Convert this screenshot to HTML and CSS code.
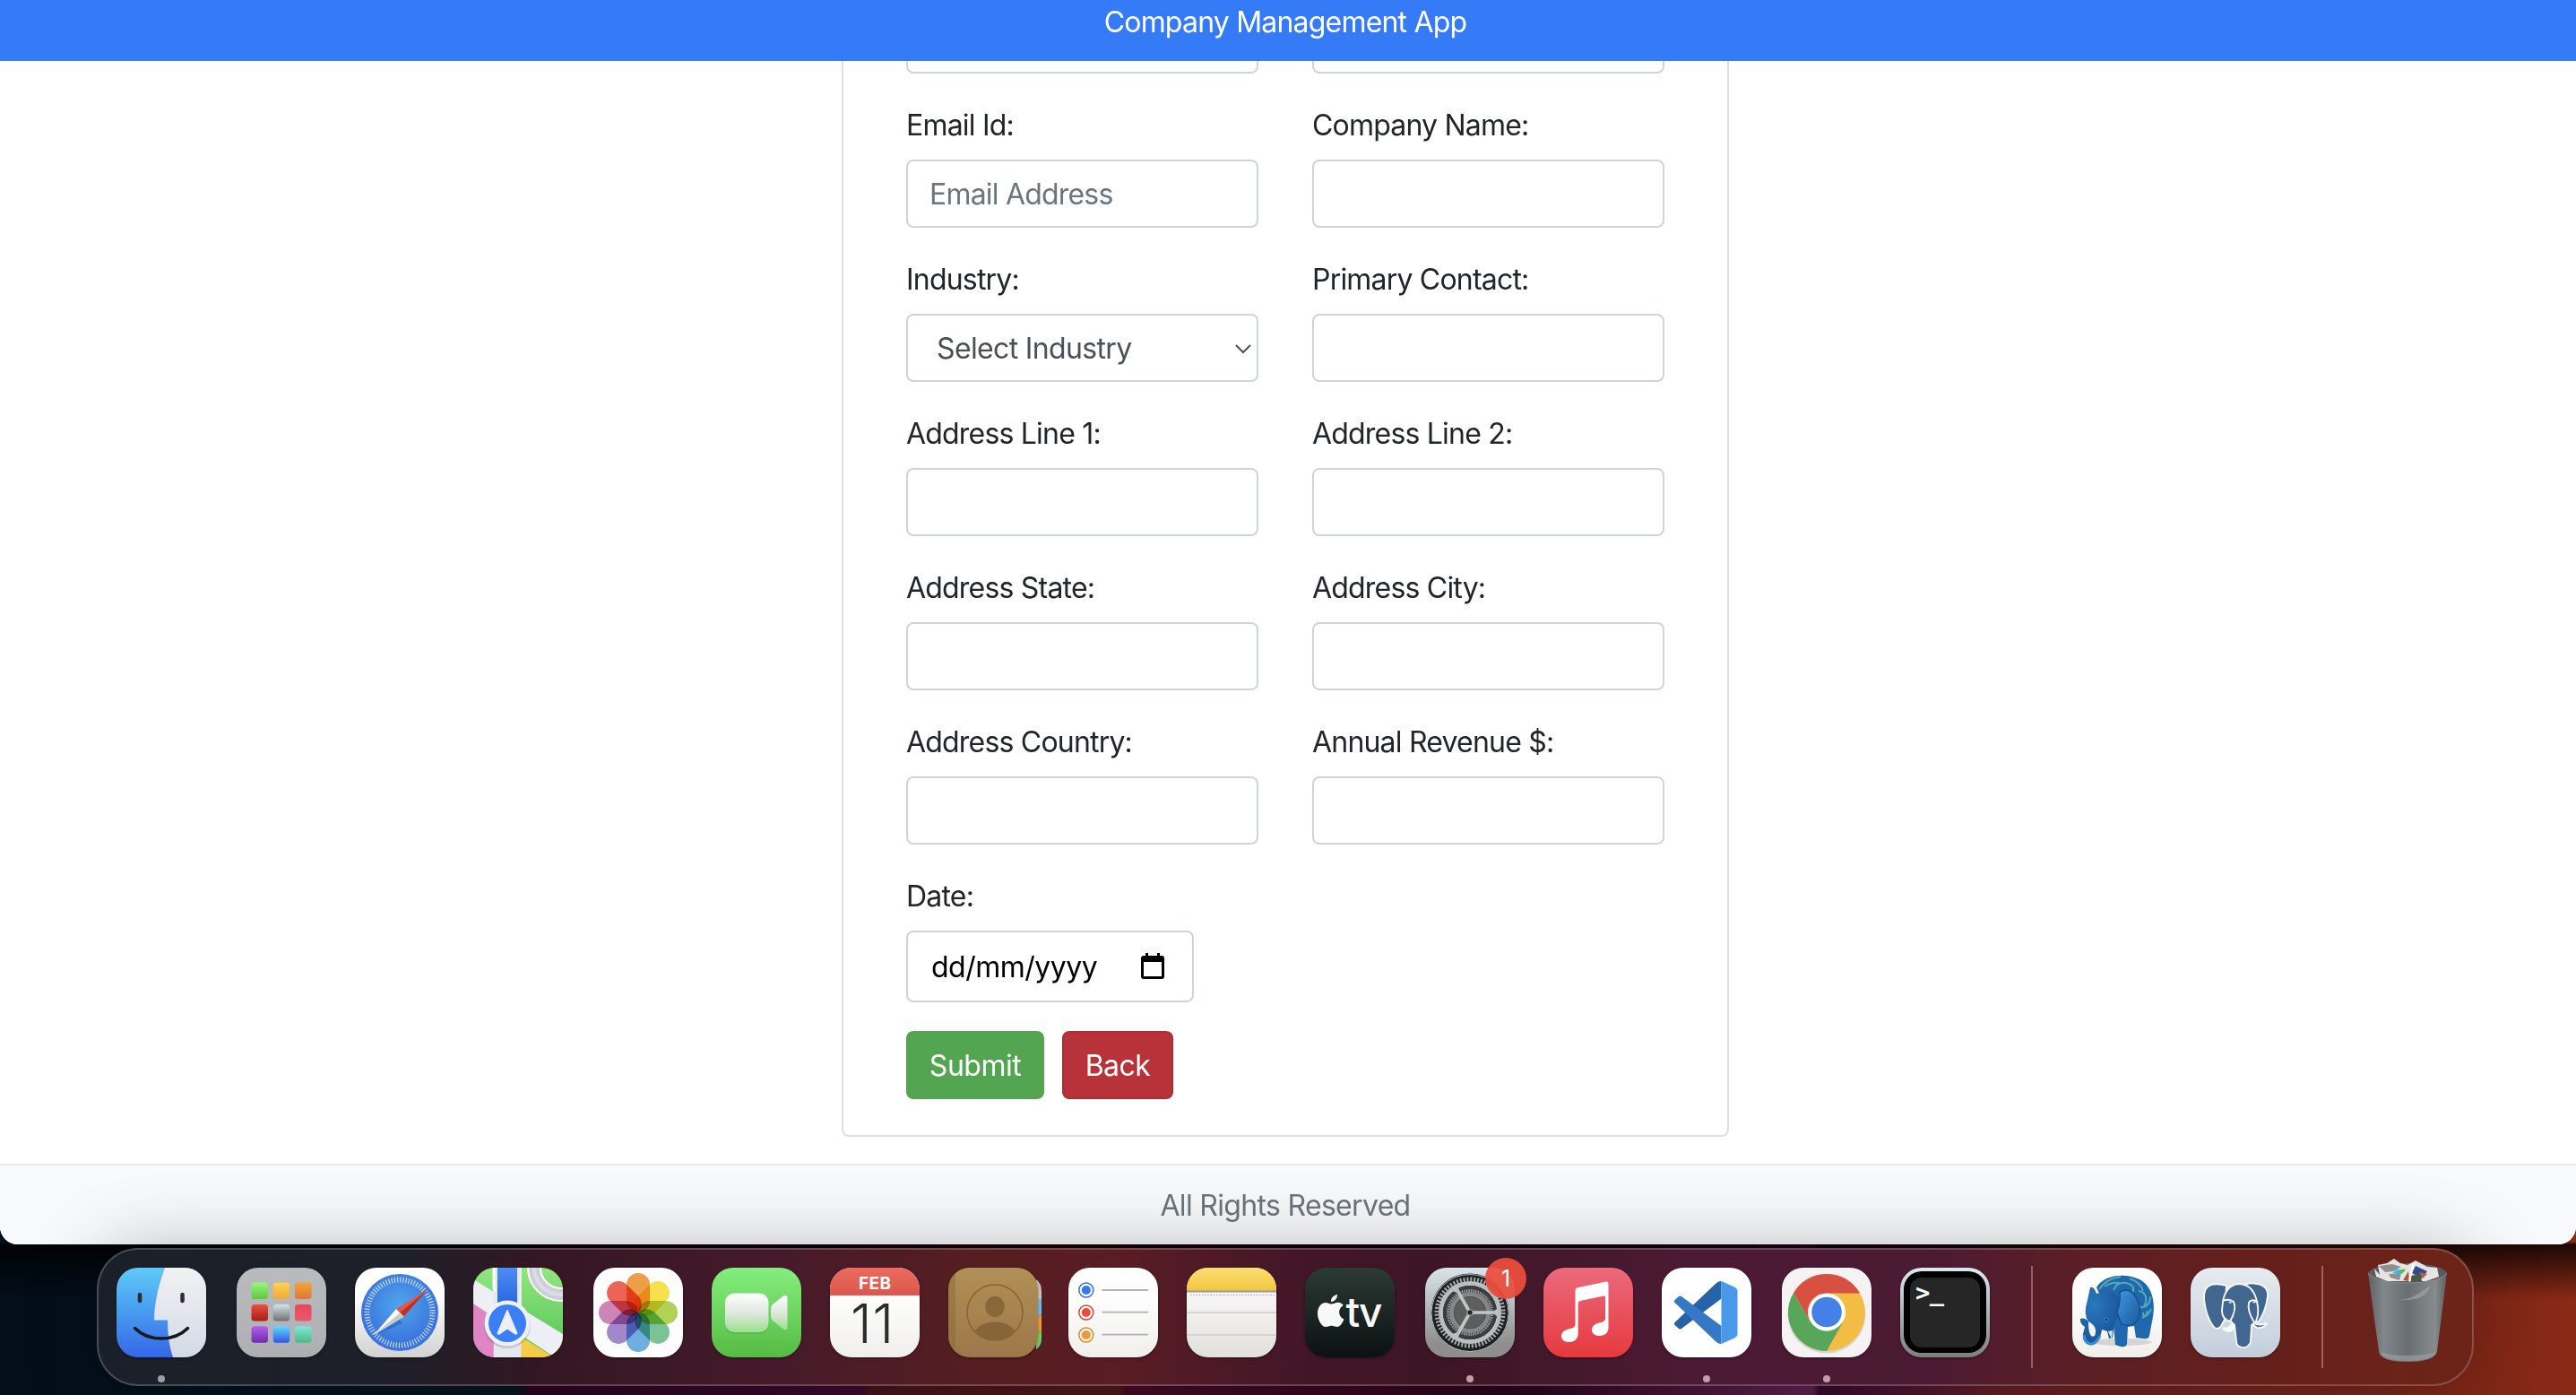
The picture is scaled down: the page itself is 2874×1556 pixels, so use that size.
FILE: index.html
```html
<!DOCTYPE html>
<html lang="en">
<head>
<meta charset="utf-8">
<title>Company Management App</title>
<link rel="stylesheet" href="styles.css">
</head>
<body>
<div class="window">
  <header class="header">Company Management App</header>
  <main class="content">
    <form class="card">
      <div class="grid">
        <div class="field"><input class="control" type="text"></div>
        <div class="field"><input class="control" type="text"></div>
        <div class="field"><label>Email Id:</label><input class="control" type="text" placeholder="Email Address"></div>
        <div class="field"><label>Company Name:</label><input class="control" type="text"></div>
        <div class="field"><label>Industry:</label>
          <div class="control select"><span>Select Industry</span>
            <svg width="20" height="12" viewBox="0 0 20 12"><path d="M2 2l8 8 8-8" fill="none" stroke="#495057" stroke-width="2"/></svg></div></div>
        <div class="field"><label>Primary Contact:</label><input class="control" type="text"></div>
        <div class="field"><label>Address Line 1:</label><input class="control" type="text"></div>
        <div class="field"><label>Address Line 2:</label><input class="control" type="text"></div>
        <div class="field"><label>Address State:</label><input class="control" type="text"></div>
        <div class="field"><label>Address City:</label><input class="control" type="text"></div>
        <div class="field"><label>Address Country:</label><input class="control" type="text"></div>
        <div class="field"><label>Annual Revenue $:</label><input class="control" type="text"></div>
        <div class="field"><label>Date:</label>
          <div class="control date"><span>dd/mm/yyyy</span>
            <svg width="26" height="29" viewBox="0 0 26 29"><path d="M5 0h3v3h10V0h3v3h2q3 0 3 3v20q0 3-3 3H3q-3 0-3-3V6q0-3 3-3h2zM3 10v16h20V10z" fill="#000" fill-rule="evenodd"/></svg></div></div>
      </div>
      <div class="actions">
        <button class="btn submit" type="button">Submit</button>
        <button class="btn back" type="button">Back</button>
      </div>
    </form>
  </main>
  <footer class="footer">All Rights Reserved</footer>
</div>

<svg width="0" height="0" class="defs">
  <defs>
    <linearGradient id="gFinder" x2="0" y2="1"><stop stop-color="#5fc9f8"/><stop offset=".45" stop-color="#4aa0f0"/><stop offset="1" stop-color="#3566e8"/></linearGradient>
    <linearGradient id="gFace" x2="0" y2="1"><stop stop-color="#f1f1f3"/><stop offset="1" stop-color="#d3dae6"/></linearGradient>
    <linearGradient id="gPad" x2="0" y2="1"><stop stop-color="#b9bbbe"/><stop offset="1" stop-color="#adafb2"/></linearGradient>
    <linearGradient id="gWhite" x2="0" y2="1"><stop offset=".3" stop-color="#fff"/><stop offset="1" stop-color="#d2d2d2"/></linearGradient>
    <linearGradient id="gPaper" x2="0" y2="1"><stop offset=".3" stop-color="#fefefe"/><stop offset="1" stop-color="#f0efec"/></linearGradient>
    <linearGradient id="gNote" x2="0" y2="1"><stop offset=".3" stop-color="#f7f6f4"/><stop offset="1" stop-color="#e1e0da"/></linearGradient>
    <radialGradient id="gSafari" cy=".4"><stop stop-color="#50a6ec"/><stop offset="1" stop-color="#3a74de"/></radialGradient>
    <linearGradient id="gGreen" x2="0" y2="1"><stop stop-color="#86ee7e"/><stop offset="1" stop-color="#55bb44"/></linearGradient>
    <linearGradient id="gMap" x2="0" y2="1"><stop stop-color="#92e67f"/><stop offset="1" stop-color="#51c356"/></linearGradient>
    <linearGradient id="gRoad" x2="0" y2="1"><stop stop-color="#4c8df5"/><stop offset="1" stop-color="#1f5fd8"/></linearGradient>
    <linearGradient id="gCam" x2="0" y2="1"><stop stop-color="#fff"/><stop offset=".5" stop-color="#dfe8de"/><stop offset="1" stop-color="#9be08f"/></linearGradient>
    <linearGradient id="gRed" x2="0" y2="1"><stop stop-color="#ee6a5f"/><stop offset="1" stop-color="#d9574c"/></linearGradient>
    <linearGradient id="gBook" x2="0" y2="1"><stop stop-color="#b29055"/><stop offset="1" stop-color="#9c774a"/></linearGradient>
    <linearGradient id="gYellow" x2="0" y2="1"><stop stop-color="#fadf73"/><stop offset="1" stop-color="#f4c53c"/></linearGradient>
    <linearGradient id="gTv" x2="0" y2="1"><stop stop-color="#2c3a35"/><stop offset="1" stop-color="#0c1112"/></linearGradient>
    <linearGradient id="gSet" x2="0" y2="1"><stop stop-color="#d9e5ec"/><stop offset=".85" stop-color="#8f8e8c"/></linearGradient>
    <linearGradient id="gMusic" x2="0" y2="1"><stop stop-color="#eb6a7c"/><stop offset="1" stop-color="#e6393e"/></linearGradient>
    <linearGradient id="gPg" x2="0" y2="1"><stop stop-color="#e7ebf0"/><stop offset="1" stop-color="#c3cedb"/></linearGradient>
    <linearGradient id="gTerm" x2="0" y2="1"><stop stop-color="#dbe9f1"/><stop offset="1" stop-color="#7e7e7e"/></linearGradient>
    <linearGradient id="gBin"><stop stop-color="#5d6366"/><stop offset=".2" stop-color="#81868a"/><stop offset=".5" stop-color="#686e71"/><stop offset=".85" stop-color="#878b8d"/><stop offset="1" stop-color="#5a5f62"/></linearGradient>
    <radialGradient id="gEle" cx=".35" cy=".3" r=".8"><stop stop-color="#2a78bd"/><stop offset="1" stop-color="#174f93"/></radialGradient>
    <linearGradient id="gEar" x2="1" y2="1"><stop stop-color="#3d97dd"/><stop offset="1" stop-color="#1d5a9f"/></linearGradient>
    <linearGradient id="p1" x2="0" y2="1"><stop stop-color="#9cf37a"/><stop offset="1" stop-color="#5cc93e"/></linearGradient>
    <linearGradient id="p2" x2="0" y2="1"><stop stop-color="#f8d54e"/><stop offset="1" stop-color="#f0a93a"/></linearGradient>
    <linearGradient id="p3" x2="0" y2="1"><stop stop-color="#efa63b"/><stop offset="1" stop-color="#e07636"/></linearGradient>
    <linearGradient id="p4" x2="0" y2="1"><stop stop-color="#ea4f40"/><stop offset="1" stop-color="#a51f16"/></linearGradient>
    <linearGradient id="p5" x2="0" y2="1"><stop stop-color="#d5e3ea"/><stop offset="1" stop-color="#6f7071"/></linearGradient>
    <linearGradient id="p6" x2="0" y2="1"><stop stop-color="#ea4660"/><stop offset="1" stop-color="#e55a69"/></linearGradient>
    <linearGradient id="p7" x2="0" y2="1"><stop stop-color="#b660e8"/><stop offset="1" stop-color="#6d2bad"/></linearGradient>
    <linearGradient id="p8" x2="0" y2="1"><stop stop-color="#62d8fc"/><stop offset="1" stop-color="#2e56e3"/></linearGradient>
    <linearGradient id="p9" x2="0" y2="1"><stop stop-color="#82e6dc"/><stop offset="1" stop-color="#4eb87c"/></linearGradient>
  </defs>
</svg>

<nav class="dock">
  <div class="app running"><svg class="tile" viewBox="0 0 100 100"><rect width="100" height="100" fill="url(#gFinder)"/><path d="M54 0C46 22 42 42 42 58.500H57Q57 84 63 100H100V0Z" fill="url(#gFace)"/><path d="M26 30v7M73.500 30v7" stroke="#2a2d30" stroke-width="4.500" stroke-linecap="round"/><path d="M20.500 67.500Q32 79 50 79T79.500 67.500" fill="none" stroke="#15181d" stroke-width="3.500" stroke-linecap="round"/></svg></div>
  <div class="app"><svg class="tile" viewBox="0 0 100 100"><rect width="100" height="100" fill="url(#gPad)"/><rect x="16.500" y="16.500" width="18.500" height="18.500" rx="3.500" fill="url(#p1)"/><rect x="40.700" y="16.500" width="18.500" height="18.500" rx="3.500" fill="url(#p2)"/><rect x="65" y="16.500" width="18.500" height="18.500" rx="3.500" fill="url(#p3)"/><rect x="16.500" y="41" width="18.500" height="18.500" rx="3.500" fill="url(#p4)"/><rect x="40.700" y="41" width="18.500" height="18.500" rx="3.500" fill="url(#p5)"/><rect x="65" y="41" width="18.500" height="18.500" rx="3.500" fill="url(#p6)"/><rect x="16.500" y="65.300" width="18.500" height="18.500" rx="3.500" fill="url(#p7)"/><rect x="40.700" y="65.300" width="18.500" height="18.500" rx="3.500" fill="url(#p8)"/><rect x="65" y="65.300" width="18.500" height="18.500" rx="3.500" fill="url(#p9)"/></svg></div>
  <div class="app"><svg class="tile" viewBox="0 0 100 100"><rect width="100" height="100" fill="url(#gWhite)"/><circle cx="50" cy="50" r="43" fill="url(#gSafari)"/><circle cx="50" cy="50" r="36.500" fill="none" stroke="#cfe4fa" stroke-width="6" stroke-dasharray="1.100 2.085"/><path d="M21 76L50 58 53 62Z" fill="#1d4f9d" opacity=".4"/><path d="M81 24.500L46 46 54.500 54.500Z" fill="#e4574b"/><path d="M81 24.500L50.200 50.200 54.500 54.500Z" fill="#b93226"/><path d="M21 75L46 46 54.500 54.500Z" fill="#fff"/><path d="M21 75L50.200 50.200 54.500 54.500Z" fill="#c9c9c9"/></svg></div>
  <div class="app"><svg class="tile" viewBox="0 0 100 100"><rect width="100" height="100" fill="url(#gMap)"/><path d="M0 36L30 60V100H0Z" fill="#df85c6"/><path d="M50 75L90 100H50Z" fill="#f6cb45"/><path d="M0 13L100 74V104L88 98 0 40Z" fill="#eeeff4"/><path d="M22.700 0H53.500V100H22.700Z" fill="#e6e8ef"/><path d="M24 0v27L22 24V0zM53 0v55" stroke="#fff" fill="#fff"/><path d="M27 0H49V50H27Z" fill="url(#gRoad)"/><circle cx="98" cy="0" r="30" fill="none" stroke="#fff" stroke-width="16"/><circle cx="98" cy="0" r="30" fill="none" stroke="#cdced8" stroke-width="12"/><circle cx="98" cy="0" r="30" fill="none" stroke="#dbdce4" stroke-width="4"/><circle cx="38" cy="64" r="26" fill="#000" opacity=".15"/><circle cx="38" cy="62" r="25.500" fill="#f0f1f6"/><circle cx="38" cy="62" r="21" fill="#3a7ff5"/><path d="M38 47L49 73Q49 75 46.500 74L38 68 29.500 74Q27 75 27 73Z" fill="#eef0f6" stroke="#eef0f6" stroke-linejoin="round"/></svg></div>
  <div class="app"><svg class="tile" viewBox="0 0 100 100"><rect width="100" height="100" fill="#fdfdfd"/><g class="petals"><rect x="37" y="6" width="26" height="44" rx="13" fill="#f09e48"/><rect x="37" y="6" width="26" height="44" rx="13" fill="#f7e34e" transform="rotate(45 50 50)"/><rect x="37" y="6" width="26" height="44" rx="13" fill="#b5d455" transform="rotate(90 50 50)"/><rect x="37" y="6" width="26" height="44" rx="13" fill="#7cc596" transform="rotate(135 50 50)"/><rect x="37" y="6" width="26" height="44" rx="13" fill="#72b0e2" transform="rotate(180 50 50)"/><rect x="37" y="6" width="26" height="44" rx="13" fill="#a388cc" transform="rotate(225 50 50)"/><rect x="37" y="6" width="26" height="44" rx="13" fill="#cf86b8" transform="rotate(270 50 50)"/><rect x="37" y="6" width="26" height="44" rx="13" fill="#ee6558" transform="rotate(315 50 50)"/></g></svg></div>
  <div class="app"><svg class="tile" viewBox="0 0 100 100"><rect width="100" height="100" fill="url(#gGreen)"/><rect x="15" y="30" width="48.500" height="44" rx="10" fill="#3da436" opacity=".35"/><rect x="15" y="28.500" width="48.500" height="43.500" rx="10" fill="url(#gCam)"/><path d="M66 46Q66 43 68 41L80 31.500Q84.500 29 84.500 34V66Q84.500 71 80 68.500L68 59Q66 57 66 54Z" fill="url(#gCam)"/></svg></div>
  <div class="app"><svg class="tile" viewBox="0 0 100 100"><rect width="100" height="100" fill="url(#gPaper)"/><rect width="100" height="31" fill="url(#gRed)"/><text x="50" y="24" class="cal-month" textLength="36">FEB</text><text x="47" y="84" class="cal-day" textLength="48">11</text></svg></div>
  <div class="app"><svg class="tabs" viewBox="0 0 8 80"><path d="M0 0Q6 4 6 14V22H0Z" fill="#c5c4bd"/><path d="M0 22H6V39L0 43Z" fill="#72bdee"/><path d="M0 43L6 39V57L0 61Z" fill="#ee9a38"/><path d="M0 61L6 57V66Q6 74 0 78Z" fill="#6bd268"/></svg><svg class="tile" viewBox="0 0 100 100"><rect width="100" height="100" fill="url(#gBook)"/><rect width="8" height="100" fill="#8a6a38" opacity=".5"/><circle cx="52" cy="50" r="31" fill="none" stroke="#876636" stroke-width="1.600"/><ellipse cx="52" cy="43.500" rx="10.700" ry="11.700" fill="#886839"/><path d="M30 70Q37 60.500 52 60.500T74 70Q66 81 52 81T30 70Z" fill="#886539"/></svg></div>
  <div class="app"><svg class="tile" viewBox="0 0 100 100"><rect width="100" height="100" fill="url(#gPaper)"/><g fill="none" stroke-width="1.500"><circle cx="19.800" cy="25" r="8" stroke="#356fdc"/><circle cx="19.800" cy="50" r="8" stroke="#d1483c"/><circle cx="19.800" cy="75" r="8" stroke="#d38b2c"/></g><circle cx="19.800" cy="25" r="5" fill="#3478f6"/><circle cx="19.800" cy="50" r="5" fill="#eb4d3d"/><circle cx="19.800" cy="75" r="5" fill="#ee9a38"/><path d="M37.500 25H89M37.500 49.700H89M37.500 74.700H89" stroke="#b1b1b6" stroke-width="1.800"/></svg></div>
  <div class="app"><svg class="tile" viewBox="0 0 100 100"><rect width="100" height="100" fill="url(#gNote)"/><rect width="100" height="26" fill="url(#gYellow)"/><rect y="25.500" width="100" height="2" fill="#9a9a9e"/><path d="M4 30.500H98" stroke="#b8b8b8" stroke-width="1.500" stroke-dasharray="1.500 1.700"/><path d="M0 50H100M0 75H100" stroke="#d5d5d6" stroke-width="1.800"/></svg></div>
  <div class="app"><svg class="tile" viewBox="0 0 100 100"><rect width="100" height="100" fill="url(#gTv)"/><path d="M29 40.500C32 40.500 33.500 38.700 37 38.700 39.500 38.700 41.500 40 42.700 42 36 46 37 54.500 43.500 57.500 41.500 62 39 66 36 66 33.500 66 32.500 64.700 29.500 64.700 26.500 64.700 25.500 66 23 66 18.500 66 14 58 14 51 14 43.500 18.500 39 23 39 25.500 39 27.500 40.500 29 40.500ZM29 38C28.500 34 32 30.500 36 30 36.300 34 33 38 29 38Z" fill="#f8f8f8"/><text x="45.500" y="65.500" class="tv" textLength="41">tv</text></svg></div>
  <div class="app running"><svg class="tile" viewBox="0 0 100 100"><rect width="100" height="100" fill="url(#gSet)"/><circle cx="50" cy="50" r="43.500" fill="#1d2021"/><circle cx="50" cy="50.500" r="43" fill="none" stroke="#b5babb" stroke-width="1"/><circle cx="50" cy="50" r="37" fill="none" stroke="#a4a9aa" stroke-width="5" stroke-dasharray="2 1.875"/><circle cx="50" cy="50" r="32.500" fill="none" stroke="#b9bfc1" stroke-width="5"/><circle cx="50" cy="50" r="30" fill="#3a3c3d"/><circle cx="50" cy="50" r="24.500" fill="none" stroke="#9a9c9c" stroke-width="3" stroke-dasharray="1.500 1.070"/><circle cx="50" cy="50" r="20.500" fill="none" stroke="#858787" stroke-width="5"/><circle cx="50" cy="50" r="17.500" fill="#5d5e5d"/><path d="M50 50H80M50 50L35.500 24.500M50 50L35.500 75.500" stroke="#c0c6c8" stroke-width="3.600"/><path d="M74 50l9-6v12zM38 29l-10-4 9-5zM38 71l-10 4 9 5z" fill="#b9bfc1"/><circle cx="50" cy="50" r="3.200" fill="#222" stroke="#aeb3b4"/></svg><span class="badge">1</span></div>
  <div class="app"><svg class="tile" viewBox="0 0 100 100"><rect width="100" height="100" fill="url(#gMusic)"/><path d="M35.500 25Q35.500 23 38 22.300L70 15.500Q72.500 15 72.500 18V67C72.500 73 68 76 62 76 57 76 54 73 54 69.500 54 65 57.500 62.500 62 61.500 67 60.500 69 59.500 69 56V33Q69 31 67 31.500L41 37Q38.700 37.500 38.700 40V73C38.700 80 34 83 28 83 23 83 20 80 20 76.500 20 72 23.500 69.500 27 68.700 33 67.500 35.500 67 35.500 62Z" fill="#fff"/></svg></div>
  <div class="app running"><svg class="tile" viewBox="0 0 100 100"><rect width="100" height="100" fill="#fff"/><path d="M66.500 15V34.500L22 68Q20.500 69 19 68L14.500 64Q13 62.500 14.500 61L61 17Q63 15 66.500 15Z" fill="#2763a7"/><path d="M66.500 85V65L22 32Q20.500 31 19 32L14.500 36Q13 37.500 14.500 39L61 83Q63 85 66.500 85Z" fill="#3478c6"/><path d="M66.500 15L82 22Q84.500 23.300 84.500 26V74Q84.500 76.700 82 78L66.500 85Z" fill="#4998e9"/></svg></div>
  <div class="app running"><svg class="tile" viewBox="0 0 100 100"><rect width="100" height="100" fill="#f4f2f3"/><circle cx="50" cy="52" r="43.500" fill="#8d7a50" opacity=".25"/><path d="M50 50L13 28A43 43 0 0 1 87 28Z" fill="#d85140"/><path d="M50 28.500H87A43 43 0 0 1 50 93L68 60Z" fill="#f2bd42"/><path d="M50 93A43 43 0 0 1 13 28L31.500 60 50 71 68.500 60Z" fill="#57a65a"/><path d="M13 28L31.500 60 50 28.500H60Z" fill="#d85140"/><circle cx="50" cy="49.500" r="21" fill="#fff"/><circle cx="50" cy="49.500" r="16.800" fill="#457fe8"/></svg></div>
  <div class="app"><svg class="tile" viewBox="0 0 100 100"><rect width="100" height="100" fill="url(#gTerm)"/><rect x="4" y="4" width="92" height="91" rx="20" fill="#000"/><rect x="11" y="11" width="78" height="78" rx="13" fill="#262626"/><text x="17" y="37" class="prompt" textLength="32">&gt;_</text></svg></div>
  <div class="sep"></div>
  <div class="app"><svg class="tile" viewBox="0 0 100 100"><rect width="100" height="100" fill="url(#gPaper)"/><ellipse cx="55" cy="83" rx="34" ry="4" fill="#000" opacity=".12"/><path d="M27 22C35 8 58 5 75 13 88 20 93 36 90 55L86 76Q85 80 79 79L71 78 69 65 62 66 61 85Q60 89 54 88L48 86 46 64Z" fill="#2068ae"/><g fill="none" stroke="#54a9b4" stroke-width="2"><path d="M30 24Q38 12 54 10M46 25Q50 15 60 17T68 27M64 12Q76 16 79 26M74 26Q84 28 82 38T74 42M80 44Q88 40 87 32M78 56Q85 53 88 46M36 21Q44 16 52 17M79 50Q80 60 84 48"/></g><path d="M17 36L20 22Q24 20 27 29L38 26Q52 26 53 40 54 52 47 62L45 78 41 79 39 71 33 69Q30 88 19 86 11 84 12 74L14 66Q8 62 9 57 14 55 18 60 18 80 25 76 29 66 18 60 12 52 17 36Z" fill="url(#gEle)"/><path d="M13 75Q14 84 20 85T31 76" fill="none" stroke="#3a8ed0" stroke-width="3"/><path d="M53 27Q63 22 69 30 77 40 75 54 70 68 55 63L50 50Q54 38 53 27Z" fill="url(#gEar)" stroke="#184f8d" stroke-width="1.500"/><circle cx="38" cy="58" r="2.200" fill="#0c376f" stroke="#4a9ad5"/><path d="M40 71L44 80 45 70Z" fill="#cfe3f2"/></svg></div>
  <div class="app"><svg class="tile" viewBox="0 0 100 100"><rect width="100" height="100" fill="url(#gPg)"/><g fill="#41668f" stroke="#f6f8fa" stroke-width="1.900" stroke-linejoin="round"><path d="M60 19Q66 16 74 18 87 20 86 32 84 48 76 60L69 62 60 40Z"/><path d="M40 20Q30 17 23 19 14 22 15 35 17 54 25 65 29 71 34 65L38 58Z"/><path d="M37 68Q42 70 48 62V65Q47 71 41 70Z" stroke-width="3.500"/><path d="M71 62Q76 65 85 62 82 68 74 67L70 64Z"/><path d="M36 38Q39 20 53 18 68 18 73 34 76 44 75 53L73 60 68 64 67 83Q64 90 57 89 51 88 51 82L49 64 45 60Q35 58 35 48Z"/><path d="M36 37Q43 34 48 38 52 46 44 60M75 38Q68 34 65 39 63 48 71 61" fill="none"/></g><path d="M42 38q3-1 4 1-2 2-4-1zM69 38q3-1 4 0-2 3-4 0z" fill="#fff"/></svg></div>
  <div class="sep"></div>
  <div class="trash"><svg viewBox="0 0 90 118"><ellipse cx="45" cy="17" rx="44" ry="12" fill="#5c5a5c"/><path d="M8 11L14 18 12 7 22 5 30 0 37 5 45 7 54 2 67 9 78 10 80 20 66 25 22 25 10 20Z" fill="#e5e5e4"/><path d="M13 8L28 6 38 9 30 14 20 15ZM24 17l14-1-2 8-10-3z" fill="#8f9090"/><path d="M28 16L34 12 43 13 36 17Z" fill="#35b9e5"/><path d="M35 13l8-2-4 6z" fill="#5bbd45"/><path d="M54 8L67 14 61 22 50 16Z" fill="#334a94"/><path d="M58 15l9 2-5 5z" fill="#c95a30"/><path d="M49 19l10-2 2 8h-12z" fill="#4c5a3c"/><path d="M40 24L46 14 47 25Z" fill="#b4543a"/><path d="M46 25L50 6 53 4 48 26Z" fill="#fff"/><path d="M1 16Q10 27 45 27T89 16L78 103Q76 115 45 115T13 103Z" fill="url(#gBin)"/><path d="M35 46Q50 46 70 30 66 48 35 46Z" fill="#b0b3b4" opacity=".5"/><path d="M14 104Q20 114 45 114T77 104Q66 108 45 108T14 104Z" fill="#a0a4a6" opacity=".6"/><path d="M1 16Q10 27 45 27T89 16" fill="none" stroke="#8e8c8d"/></svg></div>
</nav>
</body>
</html>
```
FILE: styles.css
```css
* { box-sizing: border-box; }
body {
  margin: 0;
  width: 2874px;
  height: 1556px;
  overflow: hidden;
  font: 32px/48px Inter, "Liberation Sans", sans-serif;
  letter-spacing: -.8px;
  color: #212529;
  background:
    linear-gradient(180deg, transparent 1385px, rgba(0,0,0,.8) 1388px, transparent 1450px),
    linear-gradient(90deg, #020e1a 0, #06141f 582px, #2c0220 590px, #390a2e 962px, #45131a 970px, #4b1919 1250px, #420a26 1256px, #2b041c 1700px, #5e2050 2022px, #330a2c 2030px, #4a1230 2114px, #641e22 2240px, #7a2518 2700px, #8a2a16 2874px);
}
.window {
  display: flex;
  flex-direction: column;
  height: 1388px;
  background: #fff;
  border-radius: 0 0 20px 20px;
  overflow: hidden;
}
.header {
  height: 68px;
  flex: none;
  padding: 1px 6px 0 0;
  background: #357af6;
  color: #fff;
  text-align: center;
}
.content {
  flex: 1;
  min-height: 0;
  display: flex;
  flex-direction: column;
  justify-content: flex-end;
  align-items: center;
  padding: 0 6px 30px 0;
  overflow: hidden;
}
.card {
  width: 990px;
  flex: none;
  padding: 40px 70px;
  border: 2px solid #dfdfdf;
  border-radius: 8px;
}
.grid {
  display: grid;
  grid-template-columns: 393px 393px;
  column-gap: 60px;
  row-gap: 32px;
}
.field { display: flex; flex-direction: column; gap: 16px; }
label { height: 48px; line-height: 51px; }
.control {
  width: 100%;
  height: 76px;
  padding: 0 24px;
  font: inherit;
  letter-spacing: inherit;
  color: #495057;
  background: #fff;
  border: 2px solid #ced4da;
  border-radius: 8px;
  outline: 0;
}
.control::placeholder { color: #6c757d; opacity: 1; }
.select { display: flex; align-items: center; justify-content: space-between; padding: 1px 5px 0 32px; letter-spacing: -.65px; }
.date { display: flex; align-items: center; justify-content: space-between; width: 321px; height: 80px; padding: 2px 31px 0 26px; color: #000; letter-spacing: -.5px; }
.date svg { position: relative; top: -2px; }
.actions { display: flex; gap: 20px; margin-top: 32px; }
.btn {
  height: 76px;
  padding: 1px 0 0;
  border: 0;
  border-radius: 8px;
  font: inherit;
  letter-spacing: -.5px;
  color: #fff;
}
.submit { width: 154px; background: #54a551; }
.back { width: 124px; background: #b73339; border: 2px solid #ad2f34; }
.footer {
  height: 90px;
  flex: none;
  padding: 21px 6px 0 0;
  border-top: 2px solid #e9ebed;
  background: #f8f9fb;
  color: #6c757d;
  letter-spacing: -.68px;
  text-align: center;
}
.defs { display: block; position: absolute; }

.dock {
  display: flex;
  align-items: flex-start;
  position: relative;
  width: 2652px;
  height: 154px;
  margin: 4px 0 0 108px;
  padding: 20px;
  border: 2px solid rgba(255,255,255,.2);
  border-radius: 46px;
  box-shadow: 0 0 80px rgba(0,0,0,.25);
  letter-spacing: 0;
  background: linear-gradient(90deg, #1a2029 0, #1e1f29 340px, #341722 500px, #451a2b 750px, #561e20 990px, #591d24 1140px, #431628 1340px, #3c1624 1490px, #4c1a34 1790px, #4b1a33 2040px, #5a1f26 2200px, #651f1c 2400px, #6d2418 2652px) border-box;
}
.app { position: relative; width: 100px; height: 100px; flex: none; margin-right: 32px; }
/* the leftover pixels of the row go after these apps */
.app:nth-child(1), .app:nth-child(4), .app:nth-child(8), .app:nth-child(11), .app:nth-child(14) { margin-right: 34px; }
.tile { position: relative; display: block; width: 100px; height: 100px; border-radius: 24px; box-shadow: 0 1px 3px rgba(0,0,0,.4); overflow: hidden; }
.tabs { position: absolute; left: 98px; top: 13px; width: 8px; height: 80px; }
.running::after {
  content: "";
  position: absolute;
  left: 46px;
  top: 120px;
  width: 8px;
  height: 8px;
  border-radius: 50%;
  background: #c79aae;
}
.running:first-child::after { background: #9b9fa6; }
.badge {
  position: absolute;
  left: 67px;
  top: -11px;
  width: 46px;
  height: 46px;
  border-radius: 50%;
  background: rgba(235,78,61,.94);
  color: #fff;
  font-size: 26px;
  line-height: 46px;
  text-align: center;
}
.petals rect { mix-blend-mode: multiply; }
.cal-month { font: 700 19px Inter, sans-serif; fill: #fff; text-anchor: middle; }
.cal-day { font: 300 60px Inter, sans-serif; fill: #2b2b2b; text-anchor: middle; }
.tv { font: 500 46px Inter, sans-serif; fill: #f8f8f8; }
.prompt { font: 700 27px "DejaVu Sans Mono", monospace; fill: #fff; }
.sep { flex: none; width: 2px; height: 114px; margin: -2px 44px 0 14px; background: rgba(255,190,190,.4); }
.trash { flex: none; width: 90px; height: 118px; margin: -10px 0 0 5px; }
.trash svg { display: block; width: 90px; height: 118px; }
```
